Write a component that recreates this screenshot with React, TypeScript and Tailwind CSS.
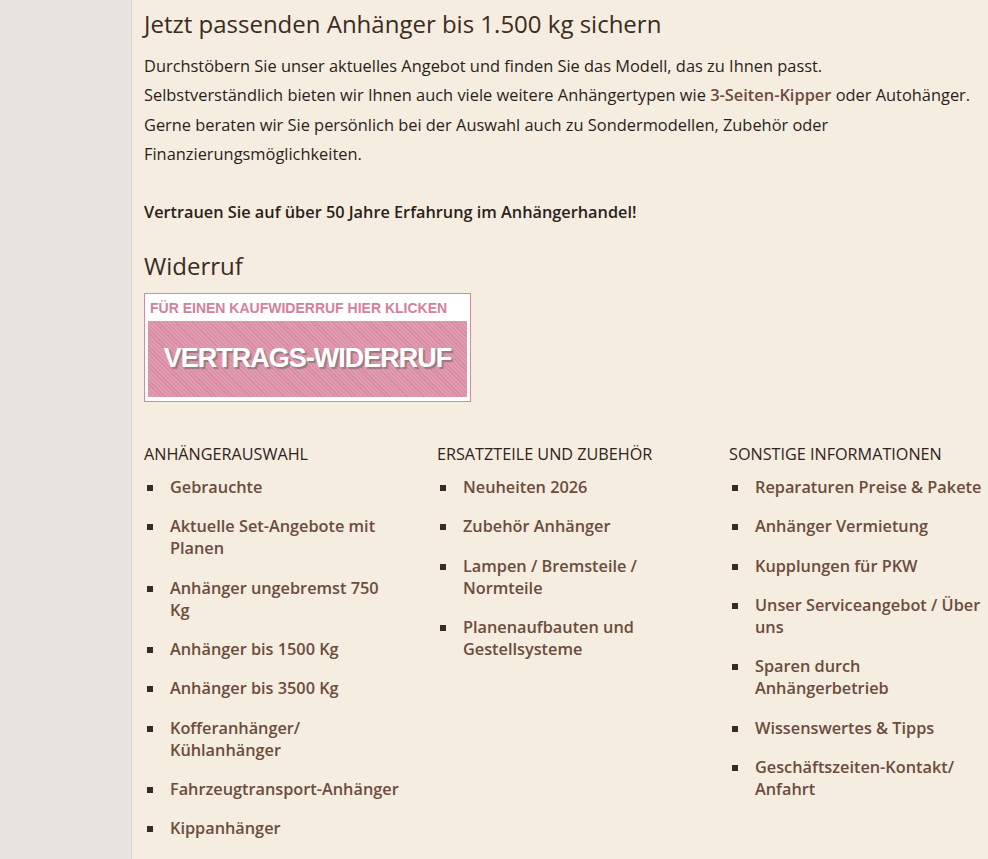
const columns: { title: string; items: string[] }[] = [
  {
    title: 'Anhängerauswahl',
    items: [
      'Gebrauchte',
      'Aktuelle Set-Angebote mit Planen',
      'Anhänger ungebremst 750 Kg',
      'Anhänger bis 1500 Kg',
      'Anhänger bis 3500 Kg',
      'Kofferanhänger/ Kühlanhänger',
      'Fahrzeugtransport-Anhänger',
      'Kippanhänger',
    ],
  },
  {
    title: 'Ersatzteile und Zubehör',
    items: [
      'Neuheiten 2026',
      'Zubehör Anhänger',
      'Lampen / Bremsteile / Normteile',
      'Planenaufbauten und Gestellsysteme',
    ],
  },
  {
    title: 'Sonstige Informationen',
    items: [
      'Reparaturen Preise & Pakete',
      'Anhänger Vermietung',
      'Kupplungen für PKW',
      'Unser Serviceangebot / Über uns',
      'Sparen durch Anhängerbetrieb',
      'Wissenswertes & Tipps',
      'Geschäftszeiten-Kontakt/ Anfahrt',
    ],
  },
];

function WiderrufBanner() {
  return (
    <a
      href="#"
      className="block w-[327px] h-[109px] border border-[#d9879f] bg-white p-[3px] pt-[5px]"
    >
      <div className="text-[14px] font-bold leading-[18px] text-[#d5809b] pl-[2px] font-['Liberation_Sans',Arial,sans-serif]">
        FÜR EINEN KAUFWIDERRUF HIER KLICKEN
      </div>
      <div className="mt-[4px] h-[76px] flex items-center justify-center bg-[#d98ca4] bg-[repeating-linear-gradient(45deg,#d88aa2_0px,#d88aa2_1px,#e09bb0_1px,#e09bb0_3px)]">
        <span className="pb-[2px] text-[27px] font-bold tracking-[-1px] text-white font-['Liberation_Sans',Arial,sans-serif] [text-shadow:2px_2px_1px_#957a80]">
          VERTRAGS-WIDERRUF
        </span>
      </div>
    </a>
  );
}

export default function App() {
  return (
    <div className="w-[988px] h-[859px] overflow-hidden flex bg-[#f4ede0] font-['Open_Sans',sans-serif] text-[#2a1f1a]">
      <div className="w-[132px] shrink-0 bg-[#e8e5e1] border-r border-[#dcd6ce]" />
      <div className="flex-1 pl-[12px] pt-[7px]">
        <h2 className="text-[24px] leading-[34px] text-[#3b2b23]">
          Jetzt passenden Anhänger bis 1.500 kg sichern
        </h2>
        <p className="mt-[10px] text-[16.4px] leading-[29.3px]">
          Durchstöbern Sie unser aktuelles Angebot und finden Sie das Modell, das zu Ihnen passt.
          <br />
          Selbstverständlich bieten wir Ihnen auch viele weitere Anhängertypen wie{' '}
          <a href="#" className="font-semibold text-[#6b4c3d]">
            3-Seiten-Kipper
          </a>{' '}
          oder Autohänger.
          <br />
          Gerne beraten wir Sie persönlich bei der Auswahl auch zu Sondermodellen, Zubehör oder
          <br />
          Finanzierungsmöglichkeiten.
        </p>
        <p className="mt-[29px] text-[16.3px] leading-[30px] font-semibold">
          Vertrauen Sie auf über 50 Jahre Erfahrung im Anhängerhandel!
        </p>
        <h2 className="mt-[22px] text-[24px] leading-[34px] text-[#3b2b23]">Widerruf</h2>
        <div className="mt-[10px]">
          <WiderrufBanner />
        </div>
        <div className="mt-[41px] flex">
          {columns.map((col, i) => (
            <div key={col.title} className={i === 1 ? 'w-[292px] shrink-0' : 'w-[293px] shrink-0'}>
              <h3 className="text-[16.2px] leading-[22px] uppercase text-[#2f231d]">{col.title}</h3>
              <ul className="mt-[11px] flex flex-col gap-[17.3px]">
                {col.items.map((item) => (
                  <li key={item} className="flex">
                    <span className="w-[26px] shrink-0 pl-[3px] pt-[9px]">
                      <span className="block w-[6px] h-[6px] bg-[#3a2a22]" />
                    </span>
                    <a
                      href="#"
                      className="w-[231px] text-[16.3px] leading-[22px] font-semibold text-[#6b4c3d]"
                    >
                      {item}
                    </a>
                  </li>
                ))}
              </ul>
            </div>
          ))}
        </div>
      </div>
    </div>
  );
}
